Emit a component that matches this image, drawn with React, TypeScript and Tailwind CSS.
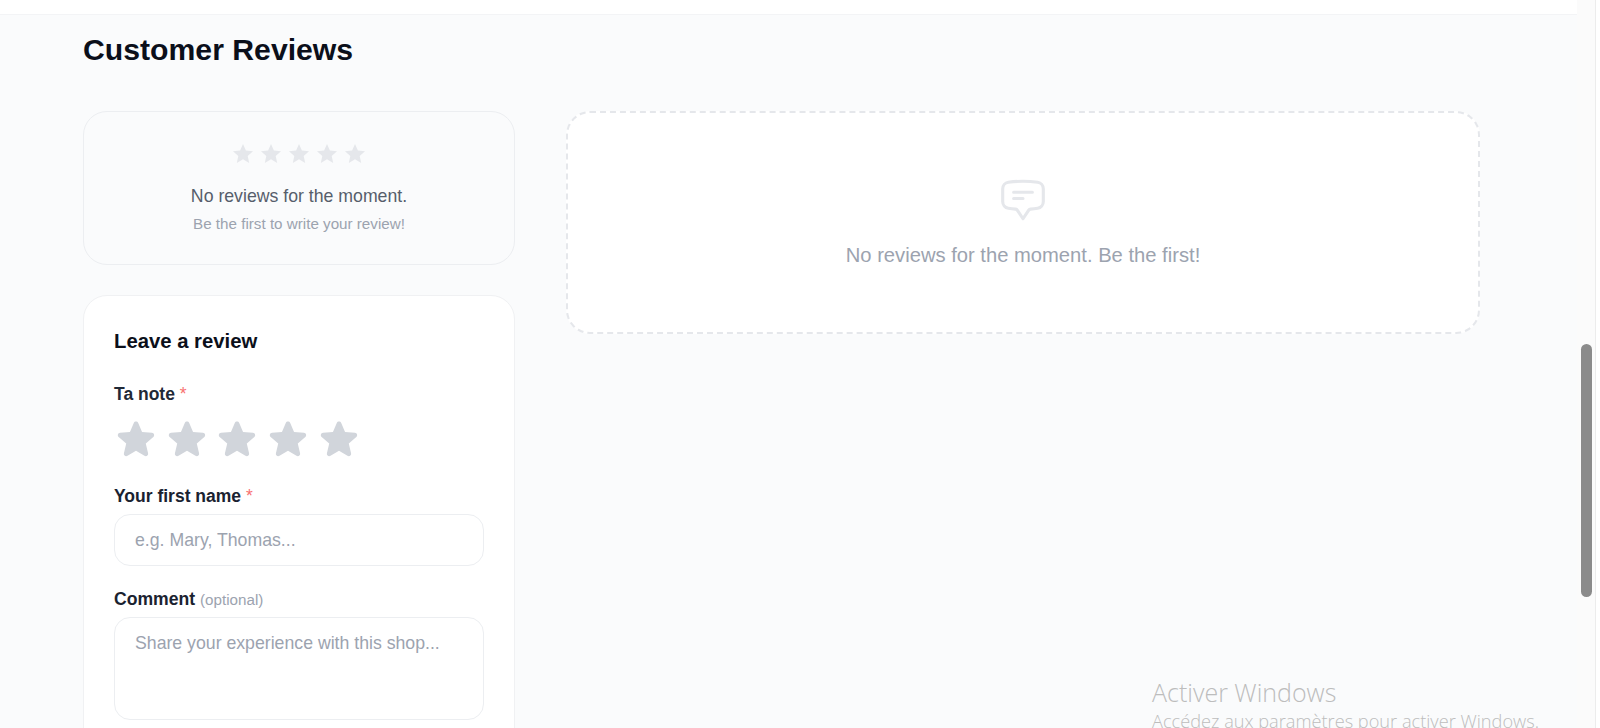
import { HiOutlineChatBubbleBottomCenterText, HiStar } from "react-icons/hi2";

const font = { fontFamily: '"Liberation Sans", Arial, sans-serif' };

function SmallStar() {
  return (
    <svg viewBox="0 0 20 19" className="w-5 h-[19px] fill-[#e5e7eb]">
      <path d="M10 0l2.9 6.5 7.1.7-5.3 4.7 1.5 7L10 15.3 3.8 18.9l1.5-7L0 7.2l7.1-.7z" />
    </svg>
  );
}

export default function App() {
  return (
    <div className="relative flex h-[728px] w-full overflow-hidden bg-white" style={font}>
      <div className="flex-1 min-w-0 flex flex-col">
        <div className="h-[15px] shrink-0 bg-white border-b border-[#f3f4f6]"></div>
        <main className="flex-1 min-h-0 bg-[#fafbfc] pl-[83px]">
          <h2 className="text-[30.2px] leading-[36px] font-bold text-[#0b0f1a] mt-[17px]">Customer Reviews</h2>

          <div className="flex gap-[51px] mt-[43px] items-start">
            <div className="w-[432px] shrink-0">
              <div className="h-[154px] rounded-3xl border border-[#eceef1] flex flex-col items-center pt-[32px]">
                <div className="flex gap-2">
                  <SmallStar />
                  <SmallStar />
                  <SmallStar />
                  <SmallStar />
                  <SmallStar />
                </div>
                <p className="mt-[21px] text-[17.7px] leading-[24px] text-[#565e6b]">No reviews for the moment.</p>
                <p className="mt-[4px] text-[15.2px] leading-[24px] text-[#9ca3af]">Be the first to write your review!</p>
              </div>

              <div className="mt-[30px] h-[500px] rounded-t-3xl border border-[#f0f1f3] bg-white px-[30px] pt-[31px]">
                <h3 className="text-[20.3px] leading-[28px] font-bold text-[#0b0f1a]">Leave a review</h3>

                <div className="mt-[27px] text-[17.5px] leading-[24px] font-bold text-[#1f2937]">
                  Ta note <span className="text-[#f87171] font-normal">*</span>
                </div>
                <div className="mt-[11px] flex gap-[6.7px] h-[44px]">
                  <HiStar size={44} className="text-[#d1d5db]" />
                  <HiStar size={44} className="text-[#d1d5db]" />
                  <HiStar size={44} className="text-[#d1d5db]" />
                  <HiStar size={44} className="text-[#d1d5db]" />
                  <HiStar size={44} className="text-[#d1d5db]" />
                </div>

                <div className="mt-[23px] text-[17.5px] leading-[24px] font-bold text-[#1a2230]">
                  Your first name <span className="text-[#f87171] font-normal">*</span>
                </div>
                <input
                  placeholder="e.g. Mary, Thomas..."
                  className="mt-[6px] block w-[370px] h-[52px] rounded-2xl border border-[#eceef1] bg-white px-[20px] text-[17.7px] placeholder:text-[#9ca3af] outline-none"
                  style={font}
                />

                <div className="mt-[21px] text-[17.6px] leading-[24px] font-bold text-[#1a2230]">
                  Comment <span className="text-[15.2px] font-normal text-[#9ca3af]">(optional)</span>
                </div>
                <textarea
                  placeholder="Share your experience with this shop..."
                  className="mt-[5px] block w-[370px] h-[103px] resize-none rounded-2xl border border-[#eceef1] bg-white px-[20px] py-[13px] text-[17.7px] leading-[24px] placeholder:text-[#9ca3af] outline-none"
                  style={font}
                />
              </div>
            </div>

            <div className="w-[914px] h-[223px] rounded-3xl border-2 border-dashed border-[#e5e7eb] bg-white flex flex-col items-center pt-[62px]">
              <HiOutlineChatBubbleBottomCenterText size={50} className="text-[#e5e7eb]" />
              <p className="mt-[16px] text-[20.2px] leading-[28px] text-[#9ca3af]">No reviews for the moment. Be the first!</p>
            </div>
          </div>
        </main>
      </div>

      {/* scrollbar */}
      <div className="w-[19px] shrink-0 bg-[#fbfbfb] border-r border-[#ececec] pl-[4px]">
        <div className="mt-[344px] h-[253px] w-[11px] rounded-full bg-[#8b8b8b]"></div>
      </div>
      <div className="w-[4px] shrink-0 bg-white"></div>

      {/* windows watermark */}
      <div className="absolute left-[1152px] top-[675px] text-[#bdbdbd] font-light" style={{ fontFamily: '"Open Sans", sans-serif' }}>
        <div className="text-[25px] leading-[34px]">Activer Windows</div>
        <div className="text-[18.2px] leading-[24px]">Accédez aux paramètres pour activer Windows.</div>
      </div>
    </div>
  );
}
